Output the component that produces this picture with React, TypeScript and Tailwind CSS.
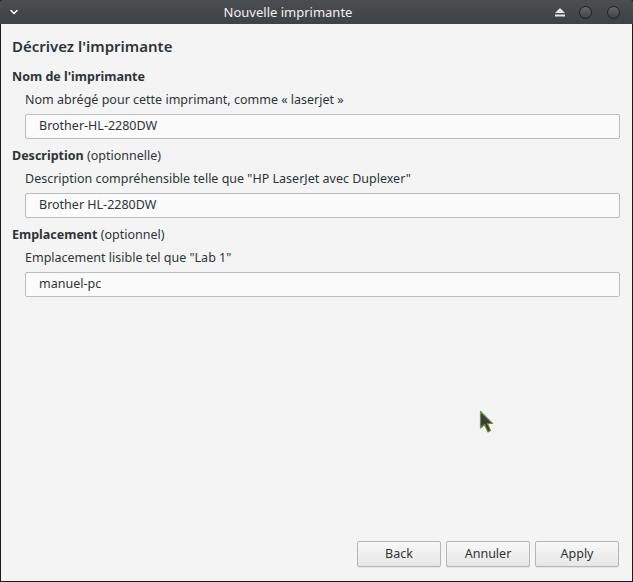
import { ChevronDown } from "lucide-react";

function WinButton() {
  return (
    <span className="flex h-[13px] w-[13px] items-center justify-center rounded-full border border-[#1e2021] bg-gradient-to-b from-[#65676a] to-[#404244]" />
  );
}

type FieldProps = {
  label: string;
  optional?: string;
  hint: string;
  value: string;
};

function Field({ label, optional, hint, value }: FieldProps) {
  return (
    <div className="flex flex-col">
      <p className="h-[19px] text-[12.5px] leading-[19px] text-[#2e3436]">
        <span className="font-bold">{label}</span>
        {optional && <span> {optional}</span>}
      </p>
      <p className="mt-[4px] h-[19px] pl-[13px] text-[12.5px] leading-[19px] text-[#2e3436]">{hint}</p>
      <div className="mt-[5px] ml-[13px] mr-[1px] flex h-[25px] items-center rounded-[2px] border border-[#bcbcbc] bg-[#fbfbfb] pl-[13px] text-[12.5px] text-[#2e3436]">
        {value}
      </div>
    </div>
  );
}

function Btn({ children }: { children: string }) {
  return (
    <button className="flex h-[26px] w-[84px] items-center justify-center rounded-[2px] border border-[#b6b6b6] bg-gradient-to-b from-[#f8f8f8] to-[#e6e6e6] text-[12.5px] text-[#2e3436] shadow-[0_1px_0_rgba(0,0,0,0.06)]">
      {children}
    </button>
  );
}

export default function App() {
  return (
    <div
      className="flex h-[582px] w-[633px] flex-col overflow-hidden bg-[#1b1c1d]"
      style={{ fontFamily: '"Noto Sans", "DejaVu Sans", sans-serif' }}
    >
      {/* title bar */}
      <div className="relative flex h-[24px] shrink-0 items-center rounded-t-[3px] bg-gradient-to-b from-[#4b4e50] to-[#3f4244] px-[8px]">
        <ChevronDown className="h-[12px] w-[12px] text-white" strokeWidth={3} />
        <span className="absolute left-0 right-[57px] text-center text-[13px] leading-[24px] text-[#f0f0f0]">
          Nouvelle imprimante
        </span>
        <div className="ml-auto flex items-center gap-[15px] pr-[5px]">
          <svg width="10" height="9" viewBox="0 0 10 9" className="mr-[-1px]">
            <path d="M5 0 L10 5 L0 5 Z" fill="#e8e8e8" />
            <rect x="0" y="6.5" width="10" height="2" fill="#e8e8e8" />
          </svg>
          <WinButton />
          <WinButton />
        </div>
      </div>

      {/* body */}
      <div className="mx-[1px] mb-[1px] flex flex-1 flex-col bg-[#f4f4f5] px-[11px]">
        <h1 className="mt-[11px] h-[22px] text-[15px] font-semibold leading-[22px] text-[#2e3436]">
          Décrivez l'imprimante
        </h1>
        <div className="mt-[10px] flex flex-col gap-[7px]">
          <Field
            label="Nom de l'imprimante"
            hint="Nom abrégé pour cette imprimant, comme « laserjet »"
            value="Brother-HL-2280DW"
          />
          <Field
            label="Description"
            optional="(optionnelle)"
            hint={'Description compréhensible telle que "HP LaserJet avec Duplexer"'}
            value="Brother HL-2280DW"
          />
          <Field
            label="Emplacement"
            optional="(optionnel)"
            hint={'Emplacement lisible tel que "Lab 1"'}
            value="manuel-pc"
          />
        </div>

        <div className="relative flex-1">
          <svg
            width="16"
            height="24"
            viewBox="0 0 16 24"
            className="absolute left-[467px] top-[113px]"
          >
            <path d="M1.5 1.5 L1.5 18 L5.5 14.5 L9 22 L11.5 20.5 L8.5 13.5 L13.5 13.5 Z" fill="#3a3b3c" stroke="#6b8f3a" strokeWidth="1.2" strokeLinejoin="round" />
          </svg>
        </div>

        <div className="mb-[14px] flex justify-end gap-[5px] pr-[2px]">
          <Btn>Back</Btn>
          <Btn>Annuler</Btn>
          <Btn>Apply</Btn>
        </div>
      </div>
    </div>
  );
}
